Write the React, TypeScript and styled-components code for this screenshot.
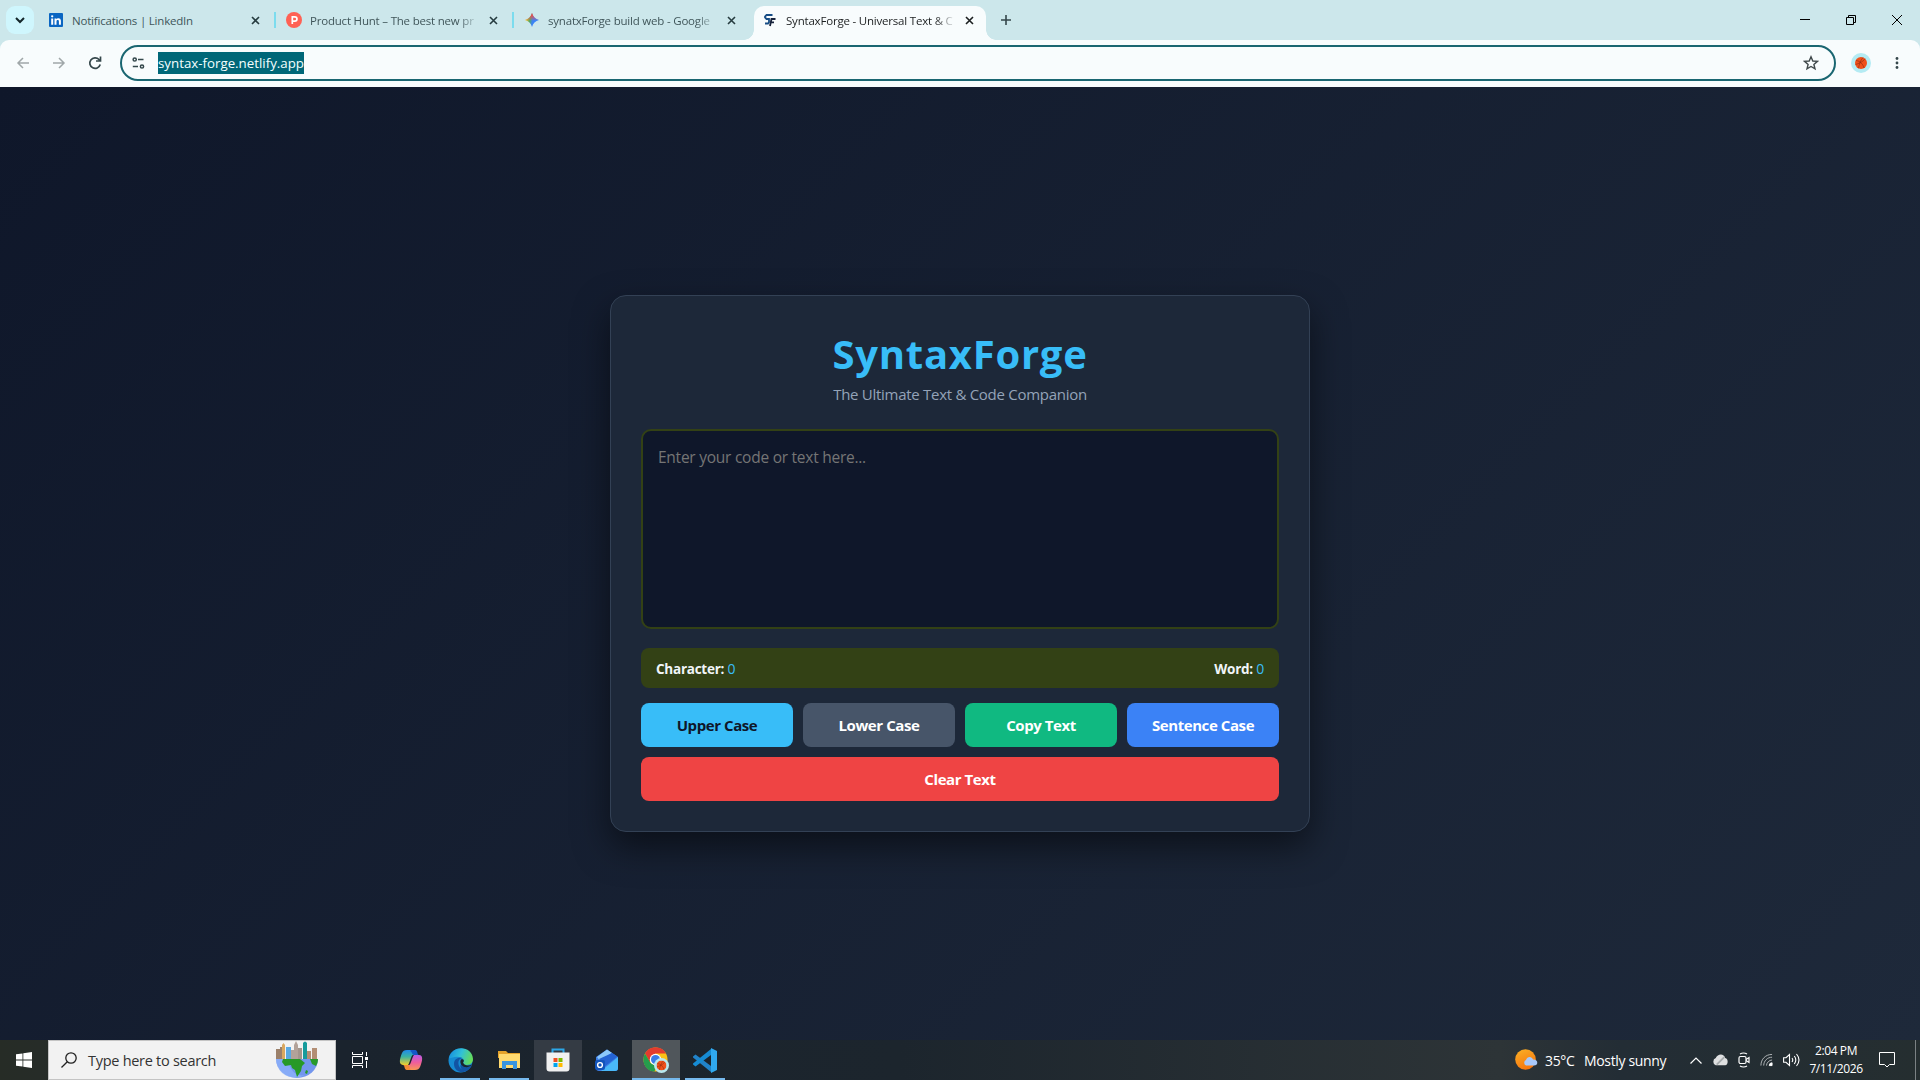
import React from 'react';
import styled, { createGlobalStyle } from 'styled-components';

const GlobalStyle = createGlobalStyle`
    * {
        box-sizing: border-box;
    }

    body {
        margin: 0;
        overflow: hidden;
        font-family: 'Open Sans', 'Noto Sans', sans-serif;
    }

    svg {
        flex-shrink: 0;
    }
`;

const Desktop = styled.div`
    display: flex;
    flex-direction: column;
    width: 1920px;
    height: 1080px;
    background: #0f172a;
`;

/* Browser window */

const TabStrip = styled.div`
    display: flex;
    height: 40px;
    padding-left: 6px;
    background: #cce7eb;
`;

const TabSearch = styled.div`
    display: flex;
    align-items: center;
    justify-content: center;
    width: 28px;
    height: 28px;
    margin: 6px 3px 0 0;
    border-radius: 9px;
    background: #cff6fd;
`;

const Tab = styled.div<{ $active?: boolean }>`
    position: relative;
    display: flex;
    align-items: center;
    width: ${(p) => (p.$active ? 232 : 238)}px;
    height: 34px;
    margin-top: 6px;
    margin-left: ${(p) => (p.$active ? 3 : 0)}px;
    padding: ${(p) => (p.$active ? '0 12px 6px 8px' : '0 15px 6px 11px')};
    border-radius: 10px 10px 0 0;
    background: ${(p) => (p.$active ? '#f8fcfd' : 'transparent')};
    color: ${(p) => (p.$active ? '#1c1f20' : '#40565a')};

    &::before,
    &::after {
        content: '';
        display: ${(p) => (p.$active ? 'block' : 'none')};
        position: absolute;
        bottom: 0;
        width: 10px;
        height: 10px;
    }

    &::before {
        left: -10px;
        background: radial-gradient(circle at 0 0, transparent 9.5px, #f8fcfd 10px);
    }

    &::after {
        right: -10px;
        background: radial-gradient(circle at 100% 0, transparent 9.5px, #f8fcfd 10px);
    }
`;

const Favicon = styled.div`
    display: flex;
    align-items: center;
    justify-content: center;
    width: 16px;
    height: 16px;
`;

const TabTitle = styled.div<{ $fade?: boolean }>`
    width: 172px;
    margin: 1px 0 0 8px;
    white-space: nowrap;
    font-size: 11.5px;
    letter-spacing: -0.2px;
    line-height: 18px;
    mask-image: ${(p) => (p.$fade ? 'linear-gradient(90deg, #000 148px, transparent 170px)' : 'none')};
`;

const TabClose = styled.div`
    display: flex;
    margin-left: auto;
`;

const TabDivider = styled.div`
    width: 2px;
    height: 16px;
    margin: 12px -1px 0;
    background: #7bdcee;
`;

const NewTab = styled.div`
    display: flex;
    align-items: center;
    margin-left: 14px;
`;

const WindowButtons = styled.div`
    display: flex;
    align-items: center;
    gap: 36px;
    margin-left: auto;
    padding-right: 18px;
`;

const ToolbarBack = styled.div`
    background: #cce7eb;
`;

const Toolbar = styled.div`
    display: flex;
    align-items: center;
    height: 47px;
    padding: 0 16px 1px 15px;
    border-radius: 9px 9px 0 0;
    background: #f8fcfd;
`;

const NavButtons = styled.div`
    display: flex;
    align-items: center;
    gap: 20px;
    width: 105px;
`;

const AddressBar = styled.div`
    display: flex;
    align-items: center;
    width: 1716px;
    height: 36px;
    padding: 0 15px 0 10px;
    border: 2px solid #1a6671;
    border-radius: 18px;
`;

const SelectedUrl = styled.span`
    height: 22px;
    margin-left: 12px;
    background: #006778;
    color: #f4ffff;
    font-size: 13.3px;
    line-height: 22px;
`;

const AddressStar = styled.div`
    display: flex;
    margin-left: auto;
`;

const Avatar = styled.div`
    display: flex;
    align-items: center;
    justify-content: center;
    width: 20px;
    height: 20px;
    margin: 0 24px 0 15px;
    border-radius: 50%;
    background: #b4ebf3;
`;

/* Page */

const Page = styled.main`
    display: flex;
    flex: 1;
    align-items: center;
    justify-content: center;
    background: linear-gradient(135deg, #0f172a, #1e293a);
`;

const Card = styled.section`
    width: 700px;
    height: 537px;
    padding: 30px;
    border: 1px solid #334155;
    border-radius: 16px;
    background: #1d2839;
    box-shadow: 0 15px 35px rgba(0, 0, 0, 0.5);
`;

const Title = styled.h1`
    height: 54px;
    margin: 1px 0 0;
    color: #38bdf8;
    font-size: 40px;
    font-weight: 700;
    line-height: 54px;
    letter-spacing: 0.75px;
    text-align: center;
    white-space: nowrap;
`;

const Subtitle = styled.p`
    height: 22px;
    margin: 2px 0 24px;
    color: #94a3b8;
    font-size: 15px;
    line-height: 22px;
    letter-spacing: -0.28px;
    text-align: center;
`;

const Editor = styled.textarea`
    display: block;
    width: 100%;
    height: 200px;
    padding: 15px;
    border: 2px solid #334115;
    border-radius: 10px;
    outline: none;
    background: #0f172a;
    color: #f8fafc;
    font-family: inherit;
    font-size: 15.5px;
    line-height: 22px;
    letter-spacing: -0.25px;
    resize: none;

    &::placeholder {
        color: #757575;
    }
`;

const Stats = styled.div`
    display: flex;
    align-items: center;
    justify-content: space-between;
    height: 40px;
    margin: 19px 0 15px;
    padding: 0 15px;
    border-radius: 8px;
    background: #334115;
    color: #f1f5f9;
    font-size: 13.5px;
    font-weight: 700;
    letter-spacing: -0.25px;
`;

const Count = styled.span`
    color: #38bdf8;
    font-size: 14px;
    font-weight: 500;
`;

const Actions = styled.div`
    display: grid;
    grid-template-columns: repeat(4, 1fr);
    gap: 10px;
`;

const ActionButton = styled.button<{ $color: string; $dark?: boolean; $wide?: boolean }>`
    grid-column: ${(p) => (p.$wide ? '1 / -1' : 'auto')};
    height: 44px;
    padding: 0;
    border: none;
    border-radius: 8px;
    background: ${(p) => p.$color};
    color: ${(p) => (p.$dark ? '#0f172a' : '#fff')};
    font-family: inherit;
    font-size: 15px;
    font-weight: 700;
    letter-spacing: -0.42px;
`;

/* Taskbar */

const Taskbar = styled.footer`
    display: flex;
    height: 40px;
    background: linear-gradient(90deg, #262c26 0, #262c28 40px, #1a232d 340px, #1c252d 900px, #2d3437 1500px, #232d35 1620px, #252e30 1920px);
    color: #fff;
`;

const StartButton = styled.div`
    display: flex;
    align-items: center;
    justify-content: center;
    width: 48px;
`;

const SearchBox = styled.div`
    display: flex;
    align-items: center;
    width: 288px;
    padding: 0 16px 0 12px;
    border: 1px solid #c4c4c4;
    background: #f2f2f2;
`;

const SearchText = styled.div`
    flex: 1;
    margin-left: 11px;
    color: #333;
    font-size: 14.5px;
    letter-spacing: -0.28px;
`;

const TaskItems = styled.div`
    display: flex;
    gap: 1px;
    margin-left: 3px;
`;

const TaskItem = styled.div<{ $running?: boolean; $highlight?: string }>`
    position: relative;
    display: flex;
    align-items: center;
    justify-content: center;
    width: 48px;
    background: ${(p) => p.$highlight || 'transparent'};

    &::after {
        content: '';
        display: ${(p) => (p.$running ? 'block' : 'none')};
        position: absolute;
        bottom: 0;
        left: ${(p) => (p.$highlight ? 0 : 4)}px;
        right: ${(p) => (p.$highlight ? 0 : 4)}px;
        height: 2px;
        background: #76b9ed;
    }
`;

const Tray = styled.div`
    display: flex;
    align-items: center;
    margin-left: auto;
`;

const Weather = styled.div`
    display: flex;
    align-items: center;
    width: 152px;
    margin-right: 23px;
    font-size: 14px;
    letter-spacing: -0.35px;
    white-space: nowrap;
`;

const Temperature = styled.span`
    width: 39px;
    margin-left: 7px;
`;

const TrayIcons = styled.div`
    display: flex;
    align-items: center;
    gap: 10px;
    margin-right: 9px;
`;

const Clock = styled.div`
    display: flex;
    flex-direction: column;
    align-items: center;
    width: 54px;
    font-size: 12px;
    letter-spacing: -0.4px;
    line-height: 18px;
    white-space: nowrap;
`;

const ActionCenter = styled.div`
    display: flex;
    margin: 0 20px 0 16px;
`;

const ShowDesktop = styled.div`
    width: 5px;
    height: 40px;
    border-left: 1px solid #7b8184;
`;

const Cross = ({ color = '#263c40' }: { color?: string }) => (
    <svg width="9" height="9" viewBox="0 0 9 9" stroke={color} strokeWidth="1.6">
        <path d="M1 1l7 7M8 1L1 8" />
    </svg>
);

const Basketball = ({ size }: { size: number }) => (
    <svg width={size} height={size} viewBox="0 0 12 12">
        <circle cx="6" cy="6" r="6" fill="#f0501a" />
        <path d="M1 3.500C5 4 8 7 9 11M.5 7.500C4 6.500 8 5 10 1.700M3.500 11.300C4 8 5.500 3 8 .5" fill="none" stroke="#8a2a10" strokeWidth=".6" />
    </svg>
);

const LinkedInIcon = () => (
    <svg width="14" height="14" viewBox="0 0 14 14">
        <rect width="14" height="14" rx="1" fill="#0a66c2" />
        <path d="M2.200 5.400h2v6.400h-2zM5.500 5.400h1.900v.9c.9-1.600 4.500-1.600 4.500 1.500v4H9.900V8.500c0-2-2.400-1.900-2.400 0v3.300h-2z" fill="#fff" />
        <circle cx="3.200" cy="3.300" r="1.150" fill="#fff" />
    </svg>
);

const ProductHuntIcon = () => (
    <svg width="16" height="16" viewBox="0 0 16 16">
        <circle cx="8" cy="8" r="8" fill="#ff6154" />
        <path d="M6.300 12V4.900h2.500a2.150 2.150 0 010 4.300H6.300" fill="none" stroke="#fff" strokeWidth="1.700" />
    </svg>
);

const GeminiIcon = () => (
    <svg width="14" height="14" viewBox="0 0 14 14">
        <defs>
            <linearGradient id="gemini" x1="0" y1=".4" x2="1" y2=".6">
                <stop offset=".1" stopColor="#f5bd27" />
                <stop offset=".35" stopColor="#54a968" />
                <stop offset=".55" stopColor="#3d83f5" />
                <stop offset="1" stopColor="#3186ff" />
            </linearGradient>
            <linearGradient id="geminiTop" x1="0" y1="0" x2="0" y2="1">
                <stop offset=".15" stopColor="#f44747" />
                <stop offset=".55" stopColor="#ef4e5e" stopOpacity="0" />
            </linearGradient>
        </defs>
        <path d="M7 0c1 3.600 3.400 6 7 7-3.600 1-6 3.400-7 7-1-3.600-3.400-6-7-7 3.600-1 6-3.400 7-7z" fill="url(#gemini)" />
        <path d="M7 0c1 3.600 3.400 6 7 7-3.600 1-6 3.400-7 7-1-3.600-3.400-6-7-7 3.600-1 6-3.400 7-7z" fill="url(#geminiTop)" />
    </svg>
);

const SyntaxForgeIcon = () => (
    <svg width="12" height="13" viewBox="0 0 12 13" fill="none" strokeWidth="1.800">
        <path d="M8.500 1H2.500L1 2.500v1L2.500 5H5v3.200L4 9.500H1" stroke="#164d86" />
        <path d="M11.500 5H7.500L6 12M6.800 8.300H10" stroke="#17233c" />
    </svg>
);

const GlobeIcon = () => (
    <svg width="44" height="38" viewBox="0 0 44 38">
        <path d="M1 18V8h4V6h3v12z" fill="#9b806a" />
        <path d="M7 18V4l1.500-2L10 4v14z" fill="#d9a860" />
        <path d="M11 6h5v13h-5z" fill="#5aa9e2" />
        <path d="M16 19V9h3V4l2-4 2 4v15z" fill="#b2a299" />
        <path d="M23 19V7h4v12z" fill="#a3958c" />
        <path d="M28 19V2q2-3 4 0v17z" fill="#169b9c" />
        <path d="M32 19V10h4v9M37 18V7h5v11z" fill="#b38e74" />
        <path d="M1 18h42a21 19 0 01-42 0z" fill="#7396ee" />
        <path d="M1 18h12c2 12 8 18 17 16-11 6-28 2-29-16z" fill="#9bc0ff" opacity=".5" />
        <path d="M8 18h17l5 4-3 3-1 5-4 6-2-7-3-2-1-3-6 1-3-4z" fill="#279927" />
        <path d="M35 18h8c0 3-1 5-2 7l-4-2zM31 29l2 1-1 3-2-1z" fill="#299b2b" />
    </svg>
);

const CopilotIcon = () => (
    <svg width="24" height="24" viewBox="0 0 24 24">
        <defs>
            <linearGradient id="copilotBlue" x1="0" y1="0" x2="0" y2="1">
                <stop stopColor="#1f8aed" />
                <stop offset=".45" stopColor="#3cb3a2" />
                <stop offset="1" stopColor="#f3cf2c" />
            </linearGradient>
            <linearGradient id="copilotPink" x1="0" y1="0" x2="0" y2="1">
                <stop stopColor="#b85be5" />
                <stop offset=".5" stopColor="#ef5d9c" />
                <stop offset="1" stopColor="#f99754" />
            </linearGradient>
        </defs>
        <path d="M8 2h7c3 0 2 5 4 5h-5c-2 0-3 8-5 10H4c-5 0-3-7-1-12 1-2 2-3 5-3z" fill="url(#copilotBlue)" />
        <path d="M12 2h4c3 0 2 5 4 5h-5c-2 0-2-4-4-4z" fill="#1557c6" />
        <path d="M16 22H9c-3 0-2-5-4-5h5c2 0 3-8 5-10h5c5 0 3 7 1 12-1 2-2 3-5 3z" fill="url(#copilotPink)" />
        <path d="M12 22H8c-3 0-2-5-4-5h5c2 0 1 4 3 5z" fill="#f48a35" />
    </svg>
);

const EdgeIcon = () => (
    <svg width="25" height="25" viewBox="0 0 25 25">
        <defs>
            <linearGradient id="edgeTop" x1="0" y1=".2" x2="1" y2=".5">
                <stop stopColor="#168ddf" />
                <stop offset=".5" stopColor="#31c1d7" />
                <stop offset="1" stopColor="#66dd57" />
            </linearGradient>
        </defs>
        <circle cx="12.500" cy="12.500" r="12" fill="#168bd2" />
        <path d="M1 10C4-3 24-3 25 11c0 7-9 7-10 4 2-2 0-6-4-6-5-1-9 2-10 1z" fill="url(#edgeTop)" />
        <path d="M15 15c1 4 6 5 9 2-4 10-18 9-18-1 0-5 4-7 8-6-5 1-5 9 1 12-3-2-4-5 0-7z" fill="#1254a3" />
        <path d="M13 11.500c2-1 4 1 2 3 1 3 5 4 9 2-1 2-5 3-7 2.500-3-.5-6-4-4-7.500z" fill="#1b242c" />
    </svg>
);

const FolderIcon = () => (
    <svg width="23" height="20" viewBox="0 0 23 20">
        <path d="M0 1h8l2 2h12v5H0z" fill="#e5a32b" />
        <path d="M1 4h21v14H1z" fill="#ffda70" />
        <path d="M4 19v-8h15v8h-4v-4H8v4z" fill="#3994df" />
    </svg>
);

const StoreIcon = () => (
    <svg width="24" height="24" viewBox="0 0 24 24">
        <path d="M6.500 6V1.500h11V6" fill="none" stroke="#2ca7e7" strokeWidth="2" />
        <path d="M.5 4.500h23V20.500a3 3 0 01-3 3h-17a3 3 0 01-3-3z" fill="#f1f1f1" />
        <path d="M7.500 10h4v4h-4z" fill="#f25022" />
        <path d="M12.500 10h4v4h-4z" fill="#7fba00" />
        <path d="M7.500 15h4v4h-4z" fill="#00a4ef" />
        <path d="M12.500 15h4v4h-4z" fill="#ffb900" />
    </svg>
);

const OutlookIcon = () => (
    <svg width="24" height="24" viewBox="0 0 24 24">
        <path d="M1 9L12 1.500 23 9v11q0 3-3 3H4q-3 0-3-3z" fill="#3b7ee6" />
        <path d="M2 9l10-7.500L17 5 5 13z" fill="#8cc8fa" />
        <path d="M4 11l13-6 5.500 3.500L9 19z" fill="#2463d3" />
        <path d="M6 23L23 9v11q0 3-3 3z" fill="#49b8f8" />
        <rect y="12" width="10" height="10" rx="2" fill="#1254bb" />
        <circle cx="5" cy="17" r="2.400" fill="none" stroke="#fff" strokeWidth="1.400" />
    </svg>
);

const ChromeIcon = () => (
    <svg width="26" height="26" viewBox="0 0 26 26">
        <circle cx="12.500" cy="12.500" r="12" fill="#fbc116" />
        <path d="M2 6.500A12 12 0 0123 6.500H12.500L7 15.500z" fill="#e33b2e" />
        <path d="M2 6.500L7.500 16l6 3-2 5.500C2 24-2 14 2 6.500z" fill="#269d4c" />
        <circle cx="12.500" cy="12.500" r="5.700" fill="#fff" />
        <circle cx="12.500" cy="12.500" r="4.500" fill="#3a7be8" />
        <circle cx="18.500" cy="18.500" r="7.500" fill="#b8e8ef" />
        <g transform="translate(13.500 13.500)"><Basketball size={10} /></g>
    </svg>
);

const CodeIcon = () => (
    <svg width="25" height="25" viewBox="0 0 25 25">
        <path d="M18 24L0 9.500v-1L2.500 6.500 18 18z" fill="#2183c9" />
        <path d="M18 1L0 15.500v1l2.500 2L18 7z" fill="#168bd3" />
        <path d="M18 0l6 3v19l-6 3z" fill="#30a9ef" />
    </svg>
);

const SunIcon = () => (
    <svg width="23" height="22" viewBox="0 0 23 22">
        <defs>
            <linearGradient id="sun" x1="0" y1="0" x2=".4" y2="1">
                <stop stopColor="#fab126" />
                <stop offset="1" stopColor="#f7780f" />
            </linearGradient>
        </defs>
        <circle cx="10.500" cy="10.500" r="10.300" fill="url(#sun)" />
        <path d="M11 16.500a3 3 0 010-5.500c1-4 6-4 7-.5 5-.5 6 6 1 6z" fill="#a9c8fa" />
    </svg>
);

const App = () => {
    return (
        <Desktop>
            <GlobalStyle />

            <TabStrip>
                <TabSearch>
                    <svg width="10" height="7" viewBox="0 0 10 7" fill="none" stroke="#14272a" strokeWidth="2">
                        <path d="M1 1l4 4 4-4" />
                    </svg>
                </TabSearch>
                <Tab>
                    <Favicon><LinkedInIcon /></Favicon>
                    <TabTitle>Notifications | LinkedIn</TabTitle>
                    <TabClose><Cross /></TabClose>
                </Tab>
                <TabDivider />
                <Tab>
                    <Favicon><ProductHuntIcon /></Favicon>
                    <TabTitle $fade>Product Hunt – The best new pr</TabTitle>
                    <TabClose><Cross /></TabClose>
                </Tab>
                <TabDivider />
                <Tab>
                    <Favicon><GeminiIcon /></Favicon>
                    <TabTitle $fade>synatxForge build web - Google</TabTitle>
                    <TabClose><Cross /></TabClose>
                </Tab>
                <Tab $active>
                    <Favicon><SyntaxForgeIcon /></Favicon>
                    <TabTitle $fade>SyntaxForge - Universal Text &amp; C</TabTitle>
                    <TabClose><Cross color="#1c1f20" /></TabClose>
                </Tab>
                <NewTab>
                    <svg width="12" height="12" viewBox="0 0 12 12" stroke="#35474b" strokeWidth="1.600">
                        <path d="M6 1v10M1 6h10" />
                    </svg>
                </NewTab>
                <WindowButtons>
                    <svg width="10" height="10" viewBox="0 0 10 10" stroke="#000"><path d="M0 4.500h10" /></svg>
                    <svg width="10" height="10" viewBox="0 0 10 10" fill="none" stroke="#000">
                        <path d="M.5 2.500h7v7h-7zM2.500 2.500v-2h7v7h-2" />
                    </svg>
                    <svg width="10" height="10" viewBox="0 0 10 10" stroke="#000"><path d="M0 0l10 10M10 0L0 10" /></svg>
                </WindowButtons>
            </TabStrip>

            <ToolbarBack>
                <Toolbar>
                    <NavButtons>
                        <svg width="16" height="16" viewBox="0 0 16 16" fill="none" stroke="#a0a7a9" strokeWidth="1.500">
                            <path d="M14 8H3M8 3L3 8l5 5" />
                        </svg>
                        <svg width="16" height="16" viewBox="0 0 16 16" fill="none" stroke="#a0a7a9" strokeWidth="1.500">
                            <path d="M2 8h11M8 3l5 5-5 5" />
                        </svg>
                        <svg width="16" height="16" viewBox="0 0 16 16" fill="none" stroke="#35474b" strokeWidth="1.700">
                            <path d="M13.200 9.500A5.300 5.300 0 1112 4.500l1.500 1.500M13.500 1.500V6H9" />
                        </svg>
                    </NavButtons>
                    <AddressBar>
                        <svg width="14" height="14" viewBox="0 0 14 14" fill="none" stroke="#33474b" strokeWidth="1.500">
                            <circle cx="2.700" cy="3.500" r="1.600" />
                            <path d="M6 3.500h5.500M.8 10.500H6" />
                            <circle cx="10" cy="10.500" r="1.600" />
                        </svg>
                        <SelectedUrl>syntax-forge.netlify.app</SelectedUrl>
                        <AddressStar>
                            <svg width="16" height="16" viewBox="0 0 16 16" fill="none" stroke="#40494b" strokeWidth="1.400">
                                <path d="M8 1.800l1.800 4.200 4.600.4-3.500 3 1.100 4.500L8 11.500l-4 2.400 1.100-4.500-3.500-3 4.600-.4z" />
                            </svg>
                        </AddressStar>
                    </AddressBar>
                    <Avatar><Basketball size={12} /></Avatar>
                    <svg width="4" height="14" viewBox="0 0 4 14" fill="#35474b">
                        <circle cx="2" cy="2.500" r="1.400" />
                        <circle cx="2" cy="7" r="1.400" />
                        <circle cx="2" cy="11.500" r="1.400" />
                    </svg>
                </Toolbar>
            </ToolbarBack>

            <Page>
                <Card>
                    <Title>SyntaxForge</Title>
                    <Subtitle>The Ultimate Text &amp; Code Companion</Subtitle>
                    <Editor placeholder="Enter your code or text here..." spellCheck={false} />
                    <Stats>
                        <div>Character: <Count>0</Count></div>
                        <div>Word: <Count>0</Count></div>
                    </Stats>
                    <Actions>
                        <ActionButton $color="#38bdf8" $dark>Upper Case</ActionButton>
                        <ActionButton $color="#475569">Lower Case</ActionButton>
                        <ActionButton $color="#10b981">Copy Text</ActionButton>
                        <ActionButton $color="#3b82f6">Sentence Case</ActionButton>
                        <ActionButton $color="#ef4444" $wide>Clear Text</ActionButton>
                    </Actions>
                </Card>
            </Page>

            <Taskbar>
                <StartButton>
                    <svg width="16" height="16" viewBox="0 0 16 16" fill="#fff">
                        <path d="M0 2.300L6.500 1.400v6.200H0zM7.300 1.300L16 0v7.600H7.300zM0 8.400h6.500v6.200L0 13.700zM7.300 8.400H16V16l-8.700-1.300z" />
                    </svg>
                </StartButton>
                <SearchBox>
                    <svg width="16" height="16" viewBox="0 0 16 16" fill="none" stroke="#222" strokeWidth="1.300">
                        <circle cx="10" cy="6" r="5.200" />
                        <path d="M6.300 9.700L.5 15.500" />
                    </svg>
                    <SearchText>Type here to search</SearchText>
                    <GlobeIcon />
                </SearchBox>
                <TaskItem>
                    <svg width="16" height="16" viewBox="0 0 16 16" fill="none" stroke="#fff">
                        <path d="M.5 4.500h10v7H.5zM.5 0v2.500h10V0M.5 16v-2.500h10V16M14.500 0v4M14.500 9v7" />
                        <path d="M13 5h3v3h-3z" fill="#fff" stroke="none" />
                    </svg>
                </TaskItem>
                <TaskItems>
                    <TaskItem><CopilotIcon /></TaskItem>
                    <TaskItem $running><EdgeIcon /></TaskItem>
                    <TaskItem $running><FolderIcon /></TaskItem>
                    <TaskItem $highlight="#343b44"><StoreIcon /></TaskItem>
                    <TaskItem><OutlookIcon /></TaskItem>
                    <TaskItem $running $highlight="#50565b"><ChromeIcon /></TaskItem>
                    <TaskItem $running><CodeIcon /></TaskItem>
                </TaskItems>
                <Tray>
                    <Weather>
                        <SunIcon />
                        <Temperature>35°C</Temperature>
                        <span>Mostly sunny</span>
                    </Weather>
                    <TrayIcons>
                        <svg width="12" height="7" viewBox="0 0 12 7" fill="none" stroke="#fff" strokeWidth="1.200"><path d="M.5 6.500L6 1l5.500 5.500" /></svg>
                        <svg width="16" height="12" viewBox="0 0 17 12">
                            <path d="M4 11.500a4 4 0 010-7.500c2-5 9-5 10 0 4 1 3 7.500 0 7.500z" fill="#dedfe0" />
                            <path d="M5 11L13 3" stroke="#a6aaac" strokeWidth="2" />
                        </svg>
                        <svg width="12" height="16" viewBox="1 0 12 16" fill="none" stroke="#fff" strokeWidth="1.200">
                            <rect x="2" y="4.500" width="7" height="7" rx="1.500" />
                            <path d="M9 7.500l3-2v5l-3-2M3 2q3.500-2 7 0M3 14q3.500 2 7 0" />
                        </svg>
                        <svg width="13" height="14" viewBox="0 0 14 14" fill="none" stroke="#b8bcbe">
                            <path d="M1 13C1 6 6 1 13 1M4 13c0-5 4-9 9-9M7 13c0-3 3-6 6-6" />
                            <path d="M10 13a3 3 0 013-3v3z" fill="#fff" stroke="#fff" />
                        </svg>
                        <svg width="17" height="14" viewBox="0 0 17 14" fill="none" stroke="#fff" strokeWidth="1.100">
                            <path d="M.6 4.700H3L6.500 1.500v11L3 9.300H.6zM9 5q1.500 2 0 4M11.300 3q3 4 0 8M13.500 1q5 6 0 12" />
                        </svg>
                    </TrayIcons>
                    <Clock>
                        <span>2:04 PM</span>
                        <span>7/11/2026</span>
                    </Clock>
                    <ActionCenter>
                        <svg width="16" height="16" viewBox="0 0 16 16" fill="none" stroke="#fff">
                            <path d="M.5.5h15v12h-5L8 15l-2.500-2.500h-5z" />
                        </svg>
                    </ActionCenter>
                    <ShowDesktop />
                </Tray>
            </Taskbar>
        </Desktop>
    );
};

export default App;
